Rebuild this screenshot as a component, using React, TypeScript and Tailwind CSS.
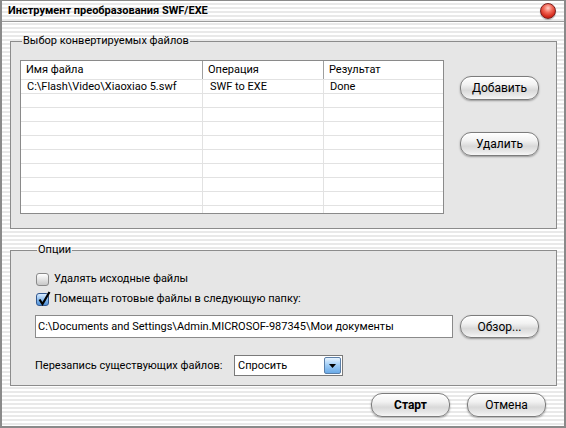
import React from "react";

const stripes =
  "bg-[repeating-linear-gradient(to_bottom,#ffffff_0px,#ffffff_2px,#e9e9e9_2px,#e9e9e9_4px)]";

function AquaButton({ label, bold, className }: { label: string; bold?: boolean; className: string }) {
  return (
    <button
      className={
        "flex items-center justify-center rounded-[11px] border border-[#7c7c7c] bg-[linear-gradient(to_bottom,#ffffff_0%,#f2f2f2_35%,#d9d9d9_60%,#e9e9e9_85%,#f7f7f7_100%)] shadow-[0_1px_2px_rgba(0,0,0,0.35),inset_0_1px_0_#ffffff] text-[12px] leading-[14px] text-black " +
        (bold ? "font-bold " : "") +
        className
      }
    >
      {label}
    </button>
  );
}

function Checkbox({ checked, label }: { checked?: boolean; label: string }) {
  return (
    <div className="flex items-center h-[16px] gap-[5px]">
      <div
        className={
          "relative w-[13px] h-[13px] rounded-[3px] border " +
          (checked
            ? "border-[#31578f] bg-[linear-gradient(to_bottom,#d8ecff,#7fb4ea_60%,#4f8fd6)]"
            : "border-[#8a8a8a] bg-[linear-gradient(to_bottom,#ffffff,#dedede_60%,#c8c8c8)]")
        }
      >
        {checked && (
          <svg className="absolute left-[1px] top-[-3px]" width="13" height="15" viewBox="0 0 13 15">
            <path d="M1.5 8.5 L4.5 13 L11.5 1" fill="none" stroke="#000" strokeWidth="2.2" strokeLinejoin="miter" />
          </svg>
        )}
      </div>
      <span className="whitespace-nowrap">{label}</span>
    </div>
  );
}

export default function App() {
  const rows = Array.from({ length: 10 });
  return (
    <div
      className={
        "w-[566px] h-[428px] flex flex-col border-x-2 border-b-2 border-t border-[#8a8a8a] text-[11px] leading-[14px] text-black font-['Roboto',sans-serif] " +
        stripes
      }
    >
      {/* Title bar */}
      <div className="h-[21px] shrink-0 flex items-center justify-between pl-[6px] pr-[8px] border-b border-[#9a9a9a]">
        <span className="font-bold text-[11px]">Инструмент преобразования SWF/EXE</span>
        <div className="w-[16px] h-[16px] rounded-full border border-[#7a2020] bg-[radial-gradient(circle_at_50%_30%,#ffd0c8_0%,#f36a5a_35%,#d42a1c_70%,#a51208_100%)] shadow-[0_1px_1px_rgba(0,0,0,0.3)]" />
      </div>

      <div className="flex-1 flex flex-col pl-[8px] pr-[7px] pt-[12px]">
        {/* Group 1 */}
        <fieldset className="border border-[#8c8c8c] bg-[#e6e6e6] pl-[9px] pr-[16px] pt-[12px] pb-[14px]">
          <legend className="ml-[2px] px-[1px] leading-[14px]">Выбор конвертируемых файлов</legend>
          <div className="flex">
            <div className="w-[424px] h-[154px] border border-[#8a8a8a] bg-white overflow-hidden">
              <div className="flex h-[19px] border-b border-[#e2e2e2] items-center">
                <div className="w-[182px] h-full pl-[5px] flex items-center border-r border-[#a0a0a0]">Имя файла</div>
                <div className="w-[121px] h-full pl-[5px] flex items-center border-r border-[#a0a0a0]">Операция</div>
                <div className="flex-1 h-full pl-[5px] flex items-center">Результат</div>
              </div>
              {rows.map((_, i) => (
                <div key={i} className="flex h-[14px] border-b border-[#e2e2e2] leading-[13px]">
                  <div className="w-[182px] pl-[6px] border-r border-[#e2e2e2] whitespace-nowrap">
                    {i === 0 ? "C:\\Flash\\Video\\Xiaoxiao 5.swf" : ""}
                  </div>
                  <div className="w-[121px] pl-[7px] border-r border-[#e2e2e2]">{i === 0 ? "SWF to EXE" : ""}</div>
                  <div className="flex-1 pl-[6px]">{i === 0 ? "Done" : ""}</div>
                </div>
              ))}
            </div>
            <div className="flex flex-col ml-[16px] pt-[16px] gap-[32px]">
              <AquaButton label="Добавить" className="w-[79px] h-[24px]" />
              <AquaButton label="Удалить" className="w-[79px] h-[24px]" />
            </div>
          </div>
        </fieldset>

        {/* Group 2 */}
        <fieldset className="mt-[14px] border border-[#8c8c8c] bg-[#e6e6e6] pl-[24px] pr-[16px] pt-[14px] pb-[9px]">
          <legend className="ml-[2px] px-[1px] leading-[14px]">Опции</legend>
          <div className="pl-[1px] flex flex-col gap-[4px]">
            <Checkbox label="Удалять исходные файлы" />
            <Checkbox checked label="Помещать готовые файлы в следующую папку:" />
          </div>
          <div className="flex items-center mt-[8px]">
            <div className="w-[418px] h-[23px] border border-[#8a8a8a] bg-white flex items-center pl-[2px] whitespace-nowrap overflow-hidden">
              C:\Documents and Settings\Admin.MICROSOF-987345\Мои документы
            </div>
            <AquaButton label="Обзор..." className="ml-[7px] w-[79px] h-[23px]" />
          </div>
          <div className="flex items-center mt-[17px]">
            <span className="w-[199px] whitespace-nowrap">Перезапись существующих файлов:</span>
            <div className="w-[109px] h-[21px] border border-[#7a7a7a] bg-white flex items-center justify-between pl-[3px] pr-[1px]">
              <span>Спросить</span>
              <div className="w-[17px] h-[17px] rounded-[2px] border border-[#5b7fa8] bg-[linear-gradient(to_bottom,#e6f3ff,#9ccbf5_50%,#6aaae8)] flex items-center justify-center">
                <svg width="7" height="4" viewBox="0 0 7 4">
                  <path d="M0 0 H7 L3.5 4 Z" fill="#000" />
                </svg>
              </div>
            </div>
          </div>
        </fieldset>

        {/* Bottom buttons */}
        <div className="flex justify-end gap-[17px] mt-[7px] pr-[11px]">
          <AquaButton label="Старт" bold className="w-[79px] h-[24px]" />
          <AquaButton label="Отмена" className="w-[79px] h-[24px]" />
        </div>
      </div>
    </div>
  );
}
